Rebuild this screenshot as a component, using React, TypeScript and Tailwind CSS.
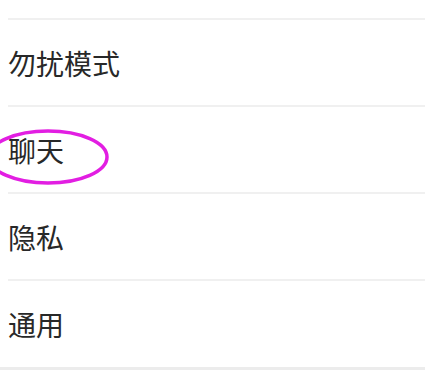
import React from "react";

const items = ["勿扰模式", "聊天", "隐私", "通用"];

export default function App() {
  return (
    <div
      className="relative w-[425px] h-[371px] bg-white overflow-hidden"
      style={{ fontFamily: '"Noto Sans CJK SC", "Noto Sans", sans-serif' }}
    >
      <div className="border-b-[3px] border-[#ececec]">
        <div className="pl-2">
          <div className="h-[20px] border-b-2 border-[#f0f0f0]" />
          {items.map((t, i) => (
            <div
              key={t}
              className={
                i < items.length - 1
                  ? "h-[87px] flex items-center border-b-2 border-[#f0f0f0]"
                  : "h-[86px] flex items-center"
              }
            >
              <span className="text-[28px] leading-none text-[#282828]">{t}</span>
            </div>
          ))}
        </div>
      </div>
      <svg
        className="absolute left-0 top-0 pointer-events-none"
        width="425"
        height="371"
        viewBox="0 0 425 371"
      >
        <ellipse cx="48" cy="157" rx="59" ry="26" fill="none" stroke="#e21ee2" strokeWidth="3.5" />
      </svg>
    </div>
  );
}
